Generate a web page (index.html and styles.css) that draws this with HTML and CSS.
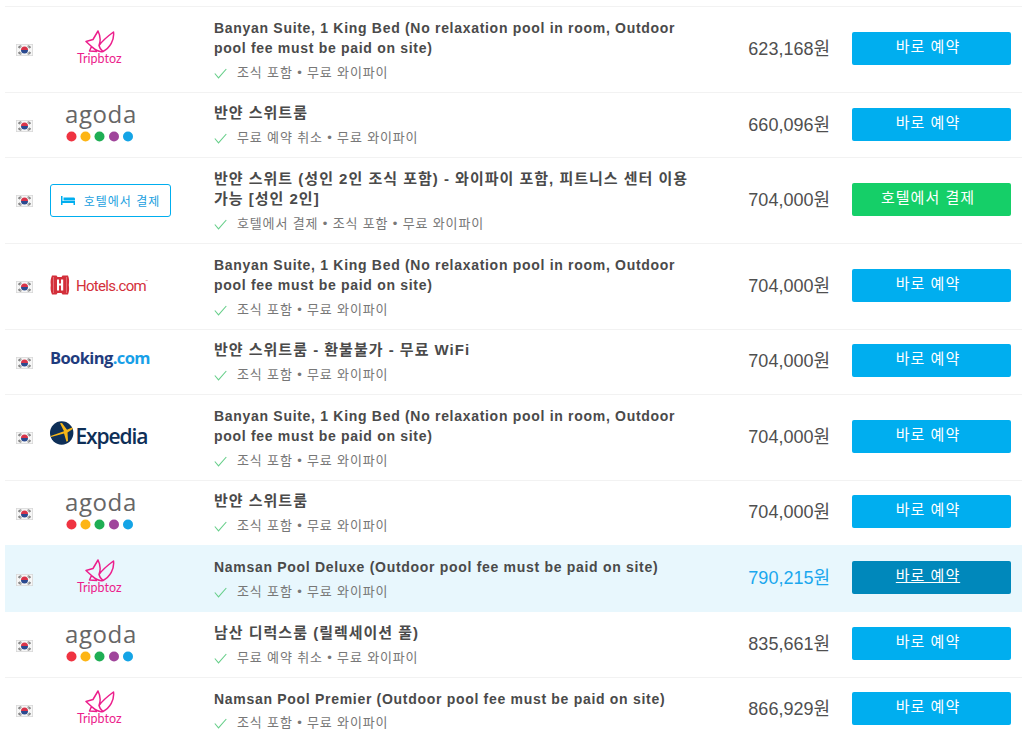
FILE: index.html
```html
<!DOCTYPE html>
<html lang="ko">
<head>
<meta charset="utf-8">
<title>호텔 객실 가격 비교</title>
<link rel="stylesheet" href="styles.css">
</head>
<body>
<svg class="defs" aria-hidden="true">
  <symbol id="flag" viewBox="0 0 17 12">
    <rect width="17" height="12" fill="#d6d6d6"/>
    <rect x=".7" y=".7" width="15.600" height="10.600" fill="#f6f6f6"/>
    <path d="M2 3.500l2.500-2M3 4.200l2.500-2M11.500 2.200l2.500 2M12.500 1.500l2.500 2M2 8.500l2.500 2M3 7.800l2.500 2M11.500 9.800l2.500-2M12.500 10.500l2.500-2" stroke="#555" stroke-width=".9"/>
    <path d="M5 6a3.500 3.500 0 0 1 7 0z" fill="#d8344a"/>
    <path d="M5 6a3.500 3.500 0 0 0 7 0z" fill="#2b4a8f"/>
  </symbol>
  <symbol id="fox" viewBox="0 0 100 40">
    <path class="fox" d="M36 11.500L43 9.500L48 1C50.500 6 51 10.500 49 15.500C53 10 58 6 63.500 2C64.500 10 60 18 53 21.500C48 22.500 45 19.500 41.500 16.500L36 11.500ZM41.500 16.500L39.500 21L47 21.500M49 15.500C49.500 18 51 20 53 21.500"/>
  </symbol>
  <symbol id="dots" viewBox="0 0 100 40">
    <circle cx="21.500" cy="31.500" r="5" fill="#ef3341"/>
    <circle cx="35.500" cy="31.500" r="5" fill="#fdb515"/>
    <circle cx="49.500" cy="31.500" r="5" fill="#1fae54"/>
    <circle cx="64" cy="31.500" r="5" fill="#a0459b"/>
    <circle cx="78" cy="31.500" r="5" fill="#14a4e6"/>
  </symbol>
  <symbol id="bed" viewBox="0 0 14 9">
    <path fill="#00aeef" d="M0 0h1.500v5H14v4h-1.500V7h-11v2H0zM2.500 1.500h10c1 0 1.500.5 1.500 1.500v1.500H2.500z"/>
  </symbol>
  <symbol id="check" viewBox="0 0 13 11">
    <path d="M.8 5.500L4.500 9.800L12.300 1" fill="none" stroke="#68cf8b" stroke-width="1.100"/>
  </symbol>
</svg>

<main class="list">
  <div class="row row-double">
    <svg class="flag"><use href="#flag"/></svg>
    <svg class="logo logo-tall" viewBox="0 0 100 40"><use href="#fox"/><text class="trip-text" x="27" y="33">Tripbtoz</text></svg>
    <div class="info">
      <h3 class="title">Banyan Suite, 1 King Bed (No relaxation pool in room, Outdoor pool fee must be paid on site)</h3>
      <p class="perks"><svg class="check"><use href="#check"/></svg>조식 포함 • 무료 와이파이</p>
    </div>
    <div class="price">623,168원</div>
    <a class="btn">바로 예약</a>
  </div>

  <div class="row">
    <svg class="flag"><use href="#flag"/></svg>
    <svg class="logo logo-tall" viewBox="0 0 100 40"><text class="agoda-text" x="15" y="17.500">agoda</text><use href="#dots"/></svg>
    <div class="info">
      <h3 class="title title-ko">반얀 스위트룸</h3>
      <p class="perks"><svg class="check"><use href="#check"/></svg>무료 예약 취소 • 무료 와이파이</p>
    </div>
    <div class="price">660,096원</div>
    <a class="btn">바로 예약</a>
  </div>

  <div class="row row-double">
    <svg class="flag"><use href="#flag"/></svg>
    <div class="badge"><svg class="bed"><use href="#bed"/></svg>호텔에서 결제</div>
    <div class="info">
      <h3 class="title title-ko">반얀 스위트 (성인 2인 조식 포함) - 와이파이 포함, 피트니스 센터 이용 가능 [성인 2인]</h3>
      <p class="perks"><svg class="check"><use href="#check"/></svg>호텔에서 결제 • 조식 포함 • 무료 와이파이</p>
    </div>
    <div class="price">704,000원</div>
    <a class="btn btn-green">호텔에서 결제</a>
  </div>

  <div class="row row-double">
    <svg class="flag"><use href="#flag"/></svg>
    <svg class="logo logo-short" viewBox="0 0 100 24">
      <path fill="#d32f3a" d="M2 .5h4.500l1 1.500h4l1-1.500H18c1.300 2.800 1.300 5.800.8 9.500.5 3.700.5 6.700-.8 9.500h-5.500l-1-1.500h-4l-1 1.500H2C.7 16.700.3 13.700.8 10 .3 6.300.7 3.300 2 .5z"/>
      <path fill="#fff" d="M7 4.500h2v4h2v-4h2.200v11H11v-5H9v5H7z"/>
      <path fill="#e98a90" d="M3 2h.7v16H3zM16 2h.7v16H16z"/>
      <text class="hotels-text" x="26" y="15.500">Hotels.com</text>
      <text class="hotels-tm" x="95.500" y="8">™</text>
    </svg>
    <div class="info">
      <h3 class="title">Banyan Suite, 1 King Bed (No relaxation pool in room, Outdoor pool fee must be paid on site)</h3>
      <p class="perks"><svg class="check"><use href="#check"/></svg>조식 포함 • 무료 와이파이</p>
    </div>
    <div class="price">704,000원</div>
    <a class="btn">바로 예약</a>
  </div>

  <div class="row row-up">
    <svg class="flag"><use href="#flag"/></svg>
    <svg class="logo logo-short" viewBox="0 0 100 24"><text class="booking-text" x="0" y="14">Booking<tspan class="booking-dot">.com</tspan></text></svg>
    <div class="info">
      <h3 class="title title-ko">반얀 스위트룸 - 환불불가 - 무료 WiFi</h3>
      <p class="perks"><svg class="check"><use href="#check"/></svg>조식 포함 • 무료 와이파이</p>
    </div>
    <div class="price">704,000원</div>
    <a class="btn">바로 예약</a>
  </div>

  <div class="row row-double">
    <svg class="flag"><use href="#flag"/></svg>
    <svg class="logo logo-mid" viewBox="0 0 100 30">
      <circle cx="11.700" cy="10" r="11.700" fill="#0e2f57"/>
      <path fill="#f7b718" d="M.7 13L14 8.300L10 .3L12 0L17 6.800L21 5C23 4 23.500 5.500 22 6.500L17.500 9.500L18 18L16.500 18.700L14 10.500L1 14z"/>
      <text class="expedia-text" x="25.500" y="21">Expedia</text>
    </svg>
    <div class="info">
      <h3 class="title">Banyan Suite, 1 King Bed (No relaxation pool in room, Outdoor pool fee must be paid on site)</h3>
      <p class="perks"><svg class="check"><use href="#check"/></svg>조식 포함 • 무료 와이파이</p>
    </div>
    <div class="price">704,000원</div>
    <a class="btn">바로 예약</a>
  </div>

  <div class="row row-up">
    <svg class="flag"><use href="#flag"/></svg>
    <svg class="logo logo-tall" viewBox="0 0 100 40"><text class="agoda-text" x="15" y="17.500">agoda</text><use href="#dots"/></svg>
    <div class="info">
      <h3 class="title title-ko">반얀 스위트룸</h3>
      <p class="perks"><svg class="check"><use href="#check"/></svg>조식 포함 • 무료 와이파이</p>
    </div>
    <div class="price">704,000원</div>
    <a class="btn">바로 예약</a>
  </div>

  <div class="row row-active">
    <svg class="flag"><use href="#flag"/></svg>
    <svg class="logo logo-tall" viewBox="0 0 100 40"><use href="#fox"/><text class="trip-text" x="27" y="33">Tripbtoz</text></svg>
    <div class="info">
      <h3 class="title">Namsan Pool Deluxe (Outdoor pool fee must be paid on site)</h3>
      <p class="perks"><svg class="check"><use href="#check"/></svg>조식 포함 • 무료 와이파이</p>
    </div>
    <div class="price">790,215원</div>
    <a class="btn">바로 예약</a>
  </div>

  <div class="row row-lower">
    <svg class="flag"><use href="#flag"/></svg>
    <svg class="logo logo-tall" viewBox="0 0 100 40"><text class="agoda-text" x="15" y="17.500">agoda</text><use href="#dots"/></svg>
    <div class="info">
      <h3 class="title title-ko">남산 디럭스룸 (릴렉세이션 풀)</h3>
      <p class="perks"><svg class="check"><use href="#check"/></svg>무료 예약 취소 • 무료 와이파이</p>
    </div>
    <div class="price">835,661원</div>
    <a class="btn">바로 예약</a>
  </div>

  <div class="row row-last">
    <svg class="flag"><use href="#flag"/></svg>
    <svg class="logo logo-tall" viewBox="0 0 100 40"><use href="#fox"/><text class="trip-text" x="27" y="33">Tripbtoz</text></svg>
    <div class="info">
      <h3 class="title">Namsan Pool Premier (Outdoor pool fee must be paid on site)</h3>
      <p class="perks"><svg class="check"><use href="#check"/></svg>조식 포함 • 무료 와이파이</p>
    </div>
    <div class="price">866,929원</div>
    <a class="btn">바로 예약</a>
  </div>
</main>
</body>
</html>
```

FILE: styles.css
```css
html, body {
  margin: 0;
  height: 745px;
  overflow: hidden;
  background: #fff;
}

body {
  font-family: "Liberation Sans", "Noto Sans CJK KR", sans-serif;
  color: #4a4a4a;
}

.defs {
  position: absolute;
  width: 0;
  height: 0;
}

.list {
  margin: 6px 5px 0;
  border-top: 1px solid #f2f2f2;
}

.row {
  display: grid;
  grid-template-columns: 45px 121px 1fr 108px 181px;
  align-items: center;
  padding: 10px 11px 9px 0;
  border-bottom: 1px solid #f2f2f2;
}

.row-double,
.row-lower {
  padding-top: 11px;
}

.row-active {
  margin-top: -1px;
  padding-top: 12px;
  padding-bottom: 10px;
  background: #e8f7fd;
  border-bottom: 0;
}

.row-last {
  padding-top: 11px;
  border-bottom: 0;
}

.flag {
  width: 17px;
  height: 12px;
  margin-left: 11px;
}

.row-double .flag {
  margin-bottom: 1px;
}

.logo {
  width: 100px;
  overflow: visible;
}

.logo-tall { height: 40px; margin-bottom: 2px; }
.logo-short { height: 24px; margin-bottom: 2px; }
.logo-mid { height: 30px; margin-bottom: 2px; }

.badge {
  display: flex;
  align-items: center;
  justify-content: center;
  gap: 9px;
  height: 31px;
  border: 1px solid #00aeef;
  border-radius: 3px;
  color: #1a9fe0;
  font-size: 12px;
  letter-spacing: 1px;
  margin-bottom: 2px;
}

.bed {
  width: 14px;
  height: 9px;
}

.info {
  padding: 0 27px 0 43px;
}

.title {
  margin: 0;
  font-size: 14px;
  font-weight: 700;
  line-height: 20px;
  letter-spacing: .7px;
  color: #4a4a4a;
}

.title-ko {
  font-size: 15px;
  letter-spacing: 1px;
}

.perks {
  display: flex;
  align-items: center;
  margin: 5px 0 0;
  font-size: 13px;
  line-height: 20px;
  letter-spacing: .85px;
  color: #777;
}

.row-last .perks {
  margin-top: 4px;
}

.check {
  width: 13px;
  height: 11px;
  margin-right: 10px;
  flex: none;
}

.price {
  text-align: right;
  font-size: 18px;
  color: #4f4f4f;
  margin-bottom: 6px;
}

.btn {
  display: block;
  height: 33px;
  margin: 0 0 2px 22px;
  width: 159px;
  box-sizing: border-box;
  padding: 4px 7px 0 0;
  text-align: center;
  font-size: 15px;
  line-height: 22px;
  letter-spacing: 1px;
  color: #fff;
  background: #00aeef;
  border-radius: 2px;
}

.row-double .btn,
.row-active .btn,
.row-lower .btn,
.row-up .btn {
  margin-bottom: 4px;
}

.row-last .btn {
  margin-bottom: 5px;
}

.row-double .price,
.row-active .price,
.row-lower .price,
.row-last .price,
.row-up .price {
  margin-bottom: 8px;
}

.btn-green {
  background: #15cf68;
}

.row-active .price {
  color: #1aa7ee;
}

.row-active .btn {
  background: #0088bb;
  text-decoration: underline;
}

.fox {
  fill: none;
  stroke: #ec1e8c;
  stroke-width: 1.500;
  stroke-linejoin: round;
}

.trip-text {
  font-family: Lato, sans-serif;
  font-size: 12.500px;
  fill: #ec1e8c;
}

.agoda-text {
  font-family: "Open Sans", sans-serif;
  font-weight: 400;
  font-size: 24px;
  letter-spacing: .6px;
  fill: #666;
}

.hotels-text {
  font-family: Roboto, sans-serif;
  font-size: 15px;
  letter-spacing: -.7px;
  fill: #d32f3a;
}

.hotels-tm {
  font-family: Roboto, sans-serif;
  font-size: 4px;
  fill: #d32f3a;
}

.booking-text {
  font-family: "Open Sans", sans-serif;
  font-weight: 700;
  font-size: 16.500px;
  letter-spacing: -.6px;
  fill: #1f3c7e;
}

.booking-dot {
  fill: #18a0e8;
}

.expedia-text {
  font-family: "Open Sans", sans-serif;
  font-weight: 600;
  font-size: 21px;
  letter-spacing: -1.100px;
  fill: #0e2f57;
}
```
